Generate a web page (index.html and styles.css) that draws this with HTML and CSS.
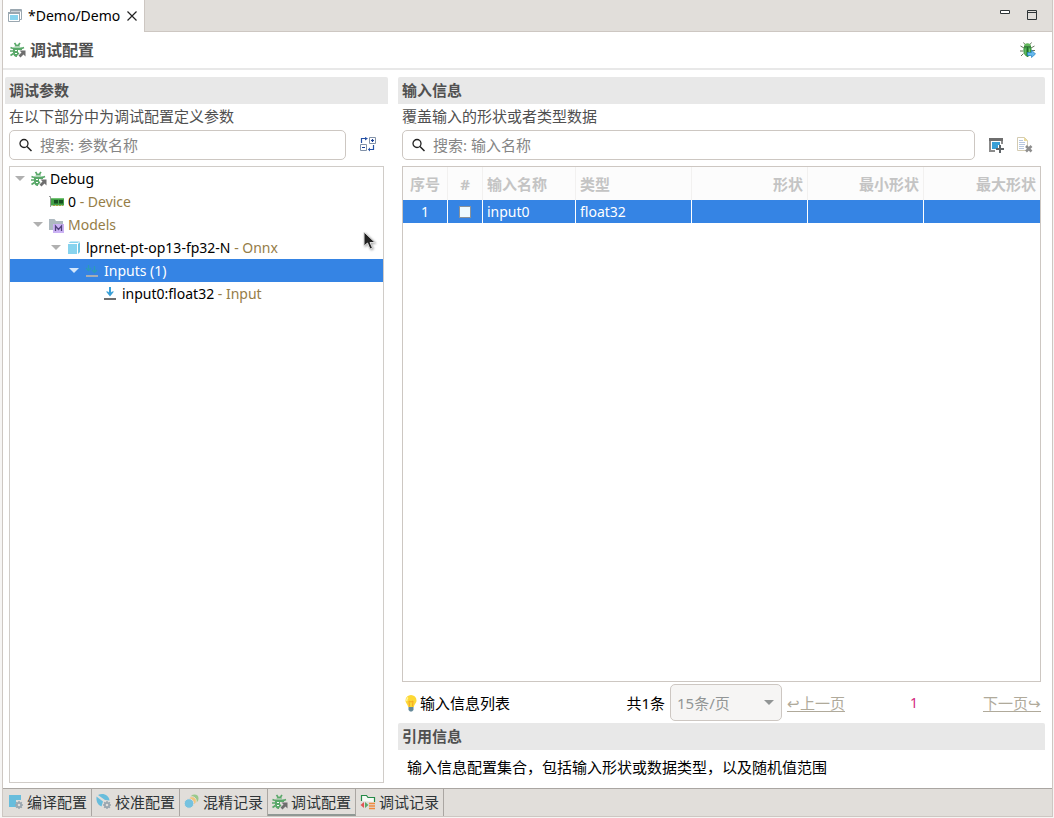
FILE: index.html
```html
<!DOCTYPE html>
<html lang="zh-CN">
<head>
<meta charset="utf-8">
<title>Demo</title>
<link rel="stylesheet" href="styles.css">
</head>
<body>
<svg class="defs" aria-hidden="true">
  <symbol id="bug" viewBox="0 0 16 16">
    <path d="M4.500 1 6 3M10 1 8.500 3M.5 5.500 3 6.500M14 5.500 11.500 6.500M0 9h3.500M.5 13.500 3.500 11.500" stroke="#59a869" stroke-width="1.700" fill="none"/>
    <path d="M4.500 4.500C4.800 1.700 9.700 1.700 10 4.500zM3 5.500h9V8H8v2l1.500 1.500L7 14v1C4.500 15 3 13 3 10.500z" fill="#59a869"/>
    <path d="M5 8.500h2M5 11.500h2" stroke="#fff" stroke-width="1"/>
    <path d="M9.500 8.500H15.500V14.500L13.500 12.500 10.500 15.500 8.500 13.500 11.500 10.500z" fill="#6e6e6e"/>
  </symbol>
  <symbol id="gear" viewBox="0 0 8 8">
    <circle cx="4" cy="4" r="2.200" fill="none" stroke="#9aa7b0" stroke-width="1.800"/>
    <path d="M4 0v1.500M4 6.500V8M0 4h1.500M6.500 4H8M1.200 1.200l1 1M5.800 5.800l1 1M6.800 1.200l-1 1M2.200 5.800l-1 1" stroke="#9aa7b0" stroke-width="1.500"/>
  </symbol>
  <symbol id="search" viewBox="0 0 14 14">
    <circle cx="5" cy="5.500" r="4" fill="none" stroke="#222" stroke-width="1.300"/>
    <path d="M8 8.500 12.500 13" stroke="#222" stroke-width="1.500"/>
  </symbol>
  <symbol id="arrow" viewBox="0 0 10 6"><path d="M0 0h10L5 5z" fill="currentColor"/></symbol>
</svg>
<div class="window">
  <header class="tabbar">
    <div class="tab">
      <svg width="14" height="14" viewBox="0 0 14 14"><path d="M2.500 3V.5h11v10H12" fill="none" stroke="#9aa7b0"/><path d="M2 1.500h11" stroke="#9aa7b0" stroke-width="2"/><path d="M.5 3.500h11v9H.5z" fill="#fff" stroke="#9aa7b0"/><path d="M0 4h12" stroke="#9aa7b0" stroke-width="2"/><path d="M2 6h8v5H2z" fill="#87d3ee"/></svg>
      <span class="tab-name">*Demo/Demo</span>
      <button class="icon-button" aria-label="关闭"><svg width="10" height="10" viewBox="0 0 10 10"><path d="m.5.5 9 9m0-9-9 9" stroke="#222" stroke-width="1.200"/></svg></button>
    </div>
    <div class="window-buttons">
      <button class="icon-button" aria-label="最小化"><svg width="10" height="14" viewBox="0 0 10 14"><path d="M.5 2.500h9v3h-9z" fill="#fff" stroke="#2e3436"/></svg></button>
      <button class="icon-button" aria-label="最大化"><svg width="10" height="14" viewBox="0 0 10 14"><path d="M.5 2.500h9v9h-9zM0 4.500h10" fill="none" stroke="#2e3436"/></svg></button>
    </div>
  </header>

  <div class="form-head">
    <svg width="16" height="16"><use href="#bug"/></svg>
    <h1>调试配置</h1>
    <button class="icon-button" aria-label="调试">
      <svg width="16" height="16" viewBox="0 0 16 16"><path d="M5 2.500 3.500.5M10 2.500l1.500-2M4 6 .5 4M11 6l3.500-2M3 9H0M3.500 11.500 1 14M12 8.500h3" stroke="#66775c" fill="none"/><path d="M4 5h7c1.500 4 .5 8-3.500 10C3.500 13 2.500 9 4 5z" fill="#3d9a43"/><path d="M4 4.500C3.500 0 11.500 0 11 4.500z" fill="#62b75c"/><path d="M4 4.700h7M7.500 5v9.500" stroke="#236b2c" fill="none"/><path d="M5.200 6.500v6M9.500 6.500v4" stroke="#74c372"/><path d="M7.500 10.500h4V8l4 4-4 3.500V13.500h-4z" fill="#65b8ed" stroke="#2482c4" stroke-width=".7"/></svg>
    </button>
  </div>

  <main class="columns">
    <section class="pane params">
      <h2>调试参数</h2>
      <p class="hint">在以下部分中为调试配置定义参数</p>
      <div class="search-row">
        <label class="search"><svg width="14" height="14"><use href="#search"/></svg><input type="text" placeholder="搜索: 参数名称" aria-label="搜索参数名称"></label>
        <button class="icon-button" aria-label="展开或折叠">
          <svg width="16" height="16" viewBox="0 0 16 16" fill="none"><path d="M9.500.5h6v6h-6zM.5 7.500h6v6h-6z" stroke="#8292a8" fill="#fff"/><path d="M11 3.500h3M12.500 2v3M2 10.500h3" stroke="#153e96" stroke-width="1.200"/><path d="M1.500 6V1.500H6M8.500 12.500h5V8" stroke="#2450a5" stroke-width="1.200"/><path d="M5 0l3 1.500L5 3.500zM10 10.500v4L8 12.500z" fill="#2450a5"/></svg>
        </button>
      </div>
      <ul class="tree">
        <li class="node"><span class="twisty"><svg width="10" height="6"><use href="#arrow"/></svg></span><svg width="16" height="16"><use href="#bug"/></svg><span>Debug</span></li>
        <li class="node level1"><span class="leaf"></span><svg width="16" height="16" viewBox="0 0 16 16"><path d="M0 2.500h1.500V13" stroke="#999" fill="none"/><path d="M2 4h13v7.500H2z" fill="#43a047"/><path d="M2 4.500h13" stroke="#73c273"/><path d="M5 6h4v3.500H5zM10 6h4v3.500h-4z" fill="#174e21"/><path d="M4 11.500h10" stroke="#a99f3b" stroke-dasharray="2 1"/></svg><span>0 <span class="kind">- Device</span></span></li>
        <li class="node level1"><span class="twisty"><svg width="10" height="6"><use href="#arrow"/></svg></span><svg width="16" height="16" viewBox="0 0 16 16"><path d="M0 2h5.500L7 4h7v3H4v6H0z" fill="#aeb9c0"/><path d="M4 7h11v9H4z" fill="#cbb2f4"/><path d="M6.500 14V9l3 3.500 3-3.500v5" fill="none" stroke="#51417a" stroke-width="1.300"/></svg><span class="kind">Models</span></li>
        <li class="node level2"><span class="twisty"><svg width="10" height="6"><use href="#arrow"/></svg></span><svg width="16" height="16" viewBox="0 0 16 16"><path d="M1 4h9v10H1z" fill="#87d3ee"/><path d="m1.500 3 2-1.500H13L10.500 3z" fill="#87d3ee"/><path d="M11 4l2-2v10l-2 2z" fill="#70c5e4"/></svg><span>lprnet-pt-op13-fp32-N <span class="kind">- Onnx</span></span></li>
        <li class="node level3 selected"><span class="twisty"><svg width="10" height="6"><use href="#arrow"/></svg></span><svg width="16" height="16" viewBox="0 0 16 16"><path d="M3.500 2v5.500M1 5l2.500 2.500L6 5M9.500 3v6.500M7 7l2.500 2.500L12 7" stroke="#2b9bb8" stroke-width="1.300" fill="none"/><path d="M1 13h12" stroke="#a6adb4" stroke-width="2"/></svg><span>Inputs (1)</span></li>
        <li class="node level4"><span class="leaf"></span><svg width="16" height="16" viewBox="0 0 16 16"><path d="M7 1v8" stroke="#389fd6" stroke-width="2"/><path d="M3 5.500h2L7 7.500l2-2h2L7 10.500z" fill="#389fd6"/><path d="M1 13h12" stroke="#6e6e6e" stroke-width="2"/></svg><span>input0:float32 <span class="kind">- Input</span></span></li>
      </ul>
      <svg class="pointer" width="14" height="20" viewBox="0 0 14 20"><path d="M2 1v14l3.500-3 2.500 6 2.500-1-2.500-5.500h5z" fill="#222" stroke="#ddd"/></svg>
    </section>

    <section class="pane inputs">
      <h2>输入信息</h2>
      <p class="hint">覆盖输入的形状或者类型数据</p>
      <div class="search-row">
        <label class="search"><svg width="14" height="14"><use href="#search"/></svg><input type="text" placeholder="搜索: 输入名称" aria-label="搜索输入名称"></label>
        <button class="icon-button" aria-label="添加"><svg width="16" height="16" viewBox="0 0 16 16"><path d="M0 1h14v3H0z" fill="#6e6e6e"/><path d="M1 4v10h5M13 4v3" stroke="#8b8b8b" stroke-width="2" fill="none"/><path d="M3 5h8v3H9v4H3z" fill="#389fd6"/><path d="M11 8v8M7 12h8" stroke="#5f6468" stroke-width="2"/></svg></button>
        <button class="icon-button" aria-label="删除" disabled><svg width="16" height="16" viewBox="0 0 16 16"><path d="M.5.5h7l3 3v10H.5z" fill="#fff" stroke="#d3cbb2"/><path d="M7 0l4 4H7z" fill="#eadb9e"/><path d="M2 3.500h4M2 5.500h6M2 7.500h6M2 9.500h5M2 11.500h5" stroke="#b7c7df"/><path d="m9 9 5.500 5.500m0-5.500L9 14.500" stroke="#8e8e8e" stroke-width="2.500"/></svg></button>
      </div>
      <div class="grid-box">
        <table>
          <colgroup><col class="c-no"><col class="c-check"><col class="c-name"><col class="c-shape"><col class="c-shape"><col class="c-shape"><col></colgroup>
          <thead><tr><th class="mid">序号</th><th class="mid">#</th><th>输入名称</th><th>类型</th><th class="end">形状</th><th class="end">最小形状</th><th class="end">最大形状</th></tr></thead>
          <tbody><tr><td class="mid">1</td><td class="mid"><input type="checkbox" aria-label="选择 input0"></td><td>input0</td><td>float32</td><td></td><td></td><td></td></tr></tbody>
        </table>
      </div>
      <div class="pager">
        <div class="pager-title"><svg width="16" height="18" viewBox="0 0 16 18"><path d="M9 1a5.500 5.500 0 0 0-5.500 5.500C3.500 9.500 6 10 6 13h6c0-3 2.500-3.500 2.500-6.500A5.500 5.500 0 0 0 9 1z" fill="#fdd835"/><path d="M7.500 12.500 7 7l2 1 2-1-.5 5.500" fill="none" stroke="#f6a623"/><path d="M6 3.500c-1 1-1.500 2-1.200 3.500" stroke="#fff59d" stroke-width="1.500" fill="none"/><path d="M6.500 13h5v3l-1.500 1.500H8L6.500 16z" fill="#648999"/></svg><span>输入信息列表</span></div>
        <label for="page-size">共1条</label>
        <div class="select"><select id="page-size" disabled><option>15条/页</option></select><svg width="10" height="6"><use href="#arrow"/></svg></div>
        <a href="#prev">↩上一页</a>
        <span class="page">1</span>
        <a href="#next">下一页↪</a>
      </div>
      <h2>引用信息</h2>
      <p class="note">输入信息配置集合，包括输入形状或数据类型，以及随机值范围</p>
    </section>
  </main>

  <nav class="pages">
    <button><svg width="16" height="16" viewBox="0 0 16 16"><path d="M1 1h12v5H8v7H1z" fill="#68bddc"/><use href="#gear" x="7" y="7" width="8" height="8"/></svg>编译配置</button>
    <button><svg width="16" height="16" viewBox="0 0 16 16"><path d="M.5 2.500 7 7.500 5.500 12.500C1.500 11 0 7 .5 2.500z" fill="#68bddc"/><path d="M2 1C7-1.500 13 1 13.500 6.500L9 6z" fill="#68bddc"/><use href="#gear" x="7" y="7" width="8" height="8"/></svg>校准配置</button>
    <button><svg width="16" height="16" viewBox="0 0 16 16"><circle cx="10.500" cy="4.500" r="4" fill="#99c98d"/><circle cx="8" cy="7" r="4.300" fill="#f2c57c" stroke="#e1deda"/><circle cx="5" cy="9.500" r="4.800" fill="#76c2df" stroke="#e1deda"/></svg>混精记录</button>
    <button class="active"><svg width="16" height="16"><use href="#bug"/></svg>调试配置</button>
    <button><svg width="16" height="16" viewBox="0 0 16 16"><path d="M1.500 7V1.500h5l1.500 2h6.500V8" stroke="#258a48" stroke-width="1.200" fill="#f5faf5"/><path d="M4 8v6l-3.500-3z" fill="#e05555"/><path d="M5 8v6l3.500-3z" fill="#59a869"/><path d="M9 9.500h6M9 12h6M9 14.500h6" stroke="#f08a3c" stroke-width="1.300"/></svg>调试记录</button>
  </nav>
</div>
</body>
</html>
```
FILE: styles.css
```css
* { box-sizing: border-box; }
body {
  margin: 0;
  background: #f6f5f4;
  color: #000;
  font: 15px/22px "Noto Sans", "Noto Sans CJK SC", sans-serif;
}
button, input, select { font: inherit; color: inherit; }
h1, h2, p, ul { margin: 0; padding: 0; }
svg { flex: none; }
.defs { position: absolute; width: 0; height: 0; }
.window {
  display: flex;
  flex-direction: column;
  height: calc(100vh - 1px);
  margin: 0 1px 0 2px;
  border: solid #cdc7c2;
  border-width: 0 1px 1px;
  background: #fff;
}
.icon-button { display: flex; padding: 0; border: 0; background: none; }

.tabbar { display: flex; justify-content: space-between; height: 32px; background: #e1deda; box-shadow: inset 0 -1px #cdc7c2; }
.tab { display: flex; align-items: center; gap: 6px; padding: 0 7px 0 5px; border-right: 1px solid #cdc7c2; background: #fff; font-size: 14px; }
.tab-name { margin-right: 1px; }
.window-buttons { display: flex; gap: 17px; padding: 8px 15px 0 0; align-items: flex-start; }

.form-head { display: flex; align-items: center; gap: 4px; height: 38px; padding: 0 16px 0 7px; border-bottom: 2px solid #e8e8e8; }
h1 { flex: 1; color: #505050; font-size: 16px; font-weight: 700; line-height: 24px; }

.columns { flex: 1; min-height: 0; display: grid; grid-template-columns: 383fr 647fr; gap: 10px; padding: 7px 7px 0 2px; }
.pane { display: flex; flex-direction: column; min-width: 0; }
h2 { height: 27px; padding-left: 4px; border-radius: 2px 2px 0 0; background: #e8e8e8; color: #505050; font-size: 15px; font-weight: 700; line-height: 27px; }
.hint { height: 26px; padding-left: 4px; color: #505050; line-height: 24px; }
.search-row { display: flex; align-items: center; gap: 12px; margin: 0 12px 6px 4px; }
.search { flex: 1; display: flex; align-items: center; gap: 7px; height: 30px; margin-right: 2px; padding: 0 9px; border: 1px solid #cdc7c2; border-radius: 5px; }
.search input { flex: 1; min-width: 0; padding: 0; border: 0; outline: 0; background: none; }
.search input::placeholder { color: #858585; opacity: 1; }

.params { position: relative; }
.tree { flex: 1; margin: 0 4px 5px; border: 1px solid #d0ccc8; list-style: none; font-size: 14px; }
.node { display: flex; align-items: center; gap: 3px; height: 23px; padding-left: 3px; white-space: nowrap; }
.level1 { padding-left: 21px; }
.level2 { padding-left: 39px; }
.level3 { padding-left: 57px; }
.level4 { padding-left: 75px; }
.twisty, .leaf { flex: none; display: flex; width: 15px; padding-left: 2px; color: #b0b0b0; }
.kind { color: #957d47; }
.selected { background: #3584e4; color: #fff; }
.selected .twisty { color: #d3e6fb; }
.pointer { position: absolute; left: 357px; top: 154px; filter: drop-shadow(1px 1px 1px #aaa); }

.grid-box { flex: 1; margin: 0 4px 2px; border: 1px solid #cdc7c2; font-size: 14px; }
table { width: 100%; border-collapse: separate; border-spacing: 0; table-layout: fixed; }
.c-no { width: 45px; }
.c-check { width: 35px; }
.c-name { width: 93px; }
.c-shape { width: 116px; }
th, td { padding: 0 4px; border-right: 1px solid #fff; text-align: left; }
th:last-child, td:last-child { border-right: 0; }
th { height: 33px; border-color: #f2f1f0; background: #fcfcfc; color: #c4c4c4; font-size: 15px; font-weight: 700; }
td { height: 23px; background: #3584e4; color: #fff; line-height: 20px; }
.mid { text-align: center; }
.end { text-align: right; }
td input { appearance: none; display: block; width: 12px; height: 12px; margin: 0 auto; border: 1px solid #8a9299; background: #eefaff; }

.pager { display: flex; align-items: center; gap: 5px; height: 37px; margin: 0 4px 2px; }
.pager-title { flex: 1; display: flex; align-items: center; gap: 2px; }
.select { display: flex; align-items: center; width: 112px; height: 37px; padding: 0 7px 0 6px; border: 1px solid #cdc7c2; border-radius: 5px; background: #f6f5f4; color: #929595; }
.select select { flex: 1; min-width: 0; appearance: none; padding: 0; border: 0; background: none; opacity: 1; }
.pager a { color: #b0aa9b; text-underline-offset: 2px; }
.page { width: 128px; color: #d4267d; font-size: 14px; text-align: center; }
.note { padding: 6px 9px 10px; }

.pages { display: flex; height: 28px; border-top: 1px solid #aaa6a2; background: #e1deda; }
.pages button { display: flex; align-items: center; gap: 3px; padding: 0 4px 2px 5px; border: 0; border-right: 1px solid #aaa6a2; background: none; color: #2e3436; }
.pages button + button { padding-left: 4px; }
.pages .active { padding-bottom: 0; border-bottom: 2px solid #8f9894; }
```
